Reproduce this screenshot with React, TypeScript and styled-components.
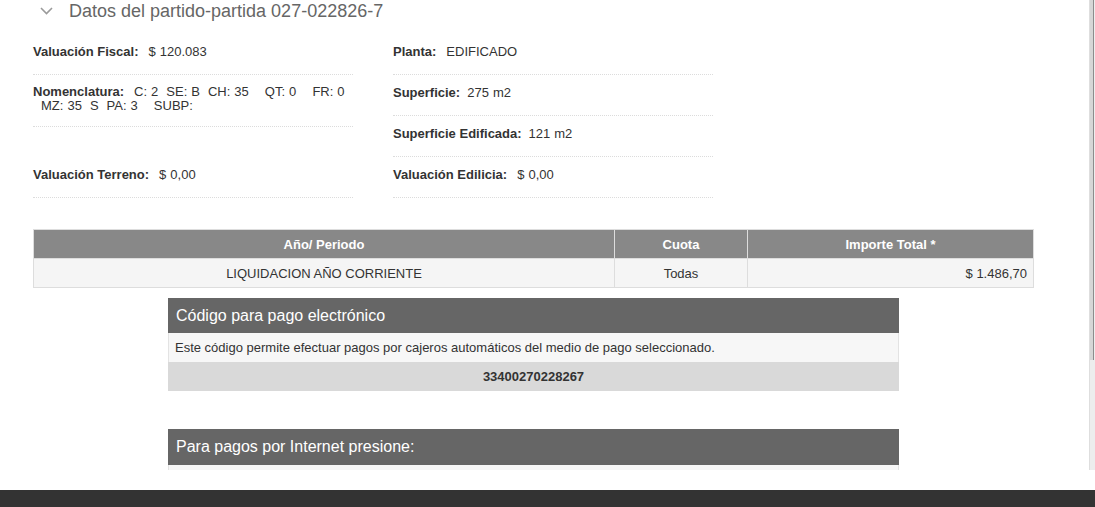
import styled, { createGlobalStyle } from "styled-components";

const GlobalStyle = createGlobalStyle`
  html, body {
    margin: 0;
    padding: 0;
    background: #fff;
  }
  body {
    font-family: "Liberation Sans", Arial, sans-serif;
    color: #333;
  }
`

const Page = styled.div`
  height: 507px;
  display: flex;
  flex-direction: column;
  overflow: hidden;
`
const Viewport = styled.div`
  height: 470px;
  display: flex;
  overflow: hidden;
`
const Content = styled.div`
  flex: 1;
  overflow: hidden;
  padding-left: 33px;
`
const ScrollTrack = styled.div`
  width: 5px;
  background: #ededed;
  border-left: 1px solid #dedede;
`
const ScrollThumb = styled.div`
  height: 360px;
  width: 3px;
  background: #d6d6d6;
  border-right: 1px solid #8c8c8c;
`
const Footer = styled.div`
  margin-top: 20px;
  height: 17px;
  background: #333;
`
const TitleBar = styled.div`
  display: flex;
  align-items: center;
  height: 22px;
  margin-left: 7px;
  gap: 16px;
  font-size: 18px;
  line-height: 22px;
  color: #666;
`
const Details = styled.div`
  display: grid;
  grid-template-columns: 320px 320px;
  column-gap: 40px;
  margin-top: 12px;
`
const Column = styled.div`
  display: flex;
  flex-direction: column;
`
const Row = styled.div<{ $pb?: number; $lh?: number }>`
  font-size: 13px;
  line-height: ${p => p.$lh || 15}px;
  padding: 10px 0 ${p => p.$pb ?? 15}px;
  border-bottom: 1px dotted #dcdcdc;
`
const Spacer = styled.div`
  height: 30px;
`
const Label = styled.span`
  font-weight: bold;
  color: #333;
`
const Value = styled.span<{ $gap?: number }>`
  margin-left: ${p => p.$gap ?? 10}px;
  color: #333;
  word-spacing: 0.4px;
`
const Table = styled.table`
  width: 1000px;
  margin-top: 31px;
  border-collapse: collapse;
  border: 1px solid #ddd;
  font-size: 13px;
  table-layout: fixed;
`
const Col = styled.col<{ $w: number }>`
  width: ${p => p.$w}px;
`
const Th = styled.th`
  background: #888;
  color: #fff;
  font-weight: bold;
  height: 28px;
  padding: 0 6px;
  text-align: center;
  border: 1px solid #ddd;
`
const Td = styled.td<{ $align?: string }>`
  background: #f5f5f5;
  color: #333;
  height: 28px;
  padding: 0 6px;
  text-align: ${p => p.$align || "center"};
  border: 1px solid #ddd;
`
const Box = styled.div<{ $mt: number }>`
  width: 731px;
  margin: ${p => p.$mt}px 0 0 135px;
`
const BoxHeader = styled.div<{ $h: number }>`
  height: ${p => p.$h}px;
  background: #666;
  color: #fff;
  font-size: 16px;
  display: flex;
  align-items: center;
  padding: 0 8px;
`
const BoxText = styled.div`
  height: 29px;
  display: flex;
  align-items: center;
  padding: 0 6px;
  background: #f7f7f7;
  border-right: 1px solid #e3e3e3;
  border-left: 1px solid #e3e3e3;
  font-size: 13px;
  color: #333;
`
const BoxCode = styled.div`
  height: 29px;
  display: flex;
  align-items: center;
  justify-content: center;
  background: #d9d9d9;
  font-size: 13px;
  font-weight: bold;
  color: #333;
`

function Chevron() {
  return (
    <svg width="13" height="8" viewBox="0 0 13 8">
      <polyline points="1,1 6.5,6.5 12,1" fill="none" stroke="#9a9a9a" strokeWidth="1.6" />
    </svg>
  )
}

export default function App() {
  const nb = "\u00a0"
  return (
    <Page>
      <GlobalStyle />
      <Viewport>
        <Content>
          <TitleBar>
            <Chevron />
            <span>Datos del partido-partida 027-022826-7</span>
          </TitleBar>
          <Details>
            <Column>
              <Row>
                <Label>Valuación Fiscal:</Label>
                <Value>$ 120.083</Value>
              </Row>
              <Row $lh={14} $pb={13}>
                <Label>Nomenclatura:</Label>
                <Value>
                  {`C: 2${nb}${nb}SE: B${nb}${nb}CH: 35${nb}${nb}${nb}${nb}QT: 0${nb}${nb}${nb}${nb}FR: 0`}
                  <br />
                  {`${nb}${nb}MZ: 35${nb}${nb}S${nb}${nb}PA: 3${nb}${nb}${nb}${nb}SUBP:`}
                </Value>
              </Row>
              <Spacer />
              <Row>
                <Label>Valuación Terreno:</Label>
                <Value>$ 0,00</Value>
              </Row>
            </Column>
            <Column>
              <Row>
                <Label>Planta:</Label>
                <Value>EDIFICADO</Value>
              </Row>
              <Row>
                <Label>Superficie:</Label>
                <Value $gap={7}>275 m2</Value>
              </Row>
              <Row>
                <Label>Superficie Edificada:</Label>
                <Value $gap={7}>121 m2</Value>
              </Row>
              <Row>
                <Label>Valuación Edilicia:</Label>
                <Value>$ 0,00</Value>
              </Row>
            </Column>
          </Details>
          <Table>
            <colgroup>
              <Col $w={581} />
              <Col $w={133} />
              <Col $w={286} />
            </colgroup>
            <thead>
              <tr>
                <Th>Año/ Periodo</Th>
                <Th>Cuota</Th>
                <Th>Importe Total *</Th>
              </tr>
            </thead>
            <tbody>
              <tr>
                <Td>LIQUIDACION AÑO CORRIENTE</Td>
                <Td>Todas</Td>
                <Td $align="right">$ 1.486,70</Td>
              </tr>
            </tbody>
          </Table>
          <Box $mt={10}>
            <BoxHeader $h={35}>Código para pago electrónico</BoxHeader>
            <BoxText>Este código permite efectuar pagos por cajeros automáticos del medio de pago seleccionado.</BoxText>
            <BoxCode>33400270228267</BoxCode>
          </Box>
          <Box $mt={38}>
            <BoxHeader $h={36}>Para pagos por Internet presione:</BoxHeader>
            <BoxText />
          </Box>
        </Content>
        <ScrollTrack>
          <ScrollThumb />
        </ScrollTrack>
      </Viewport>
      <Footer />
    </Page>
  )
}
